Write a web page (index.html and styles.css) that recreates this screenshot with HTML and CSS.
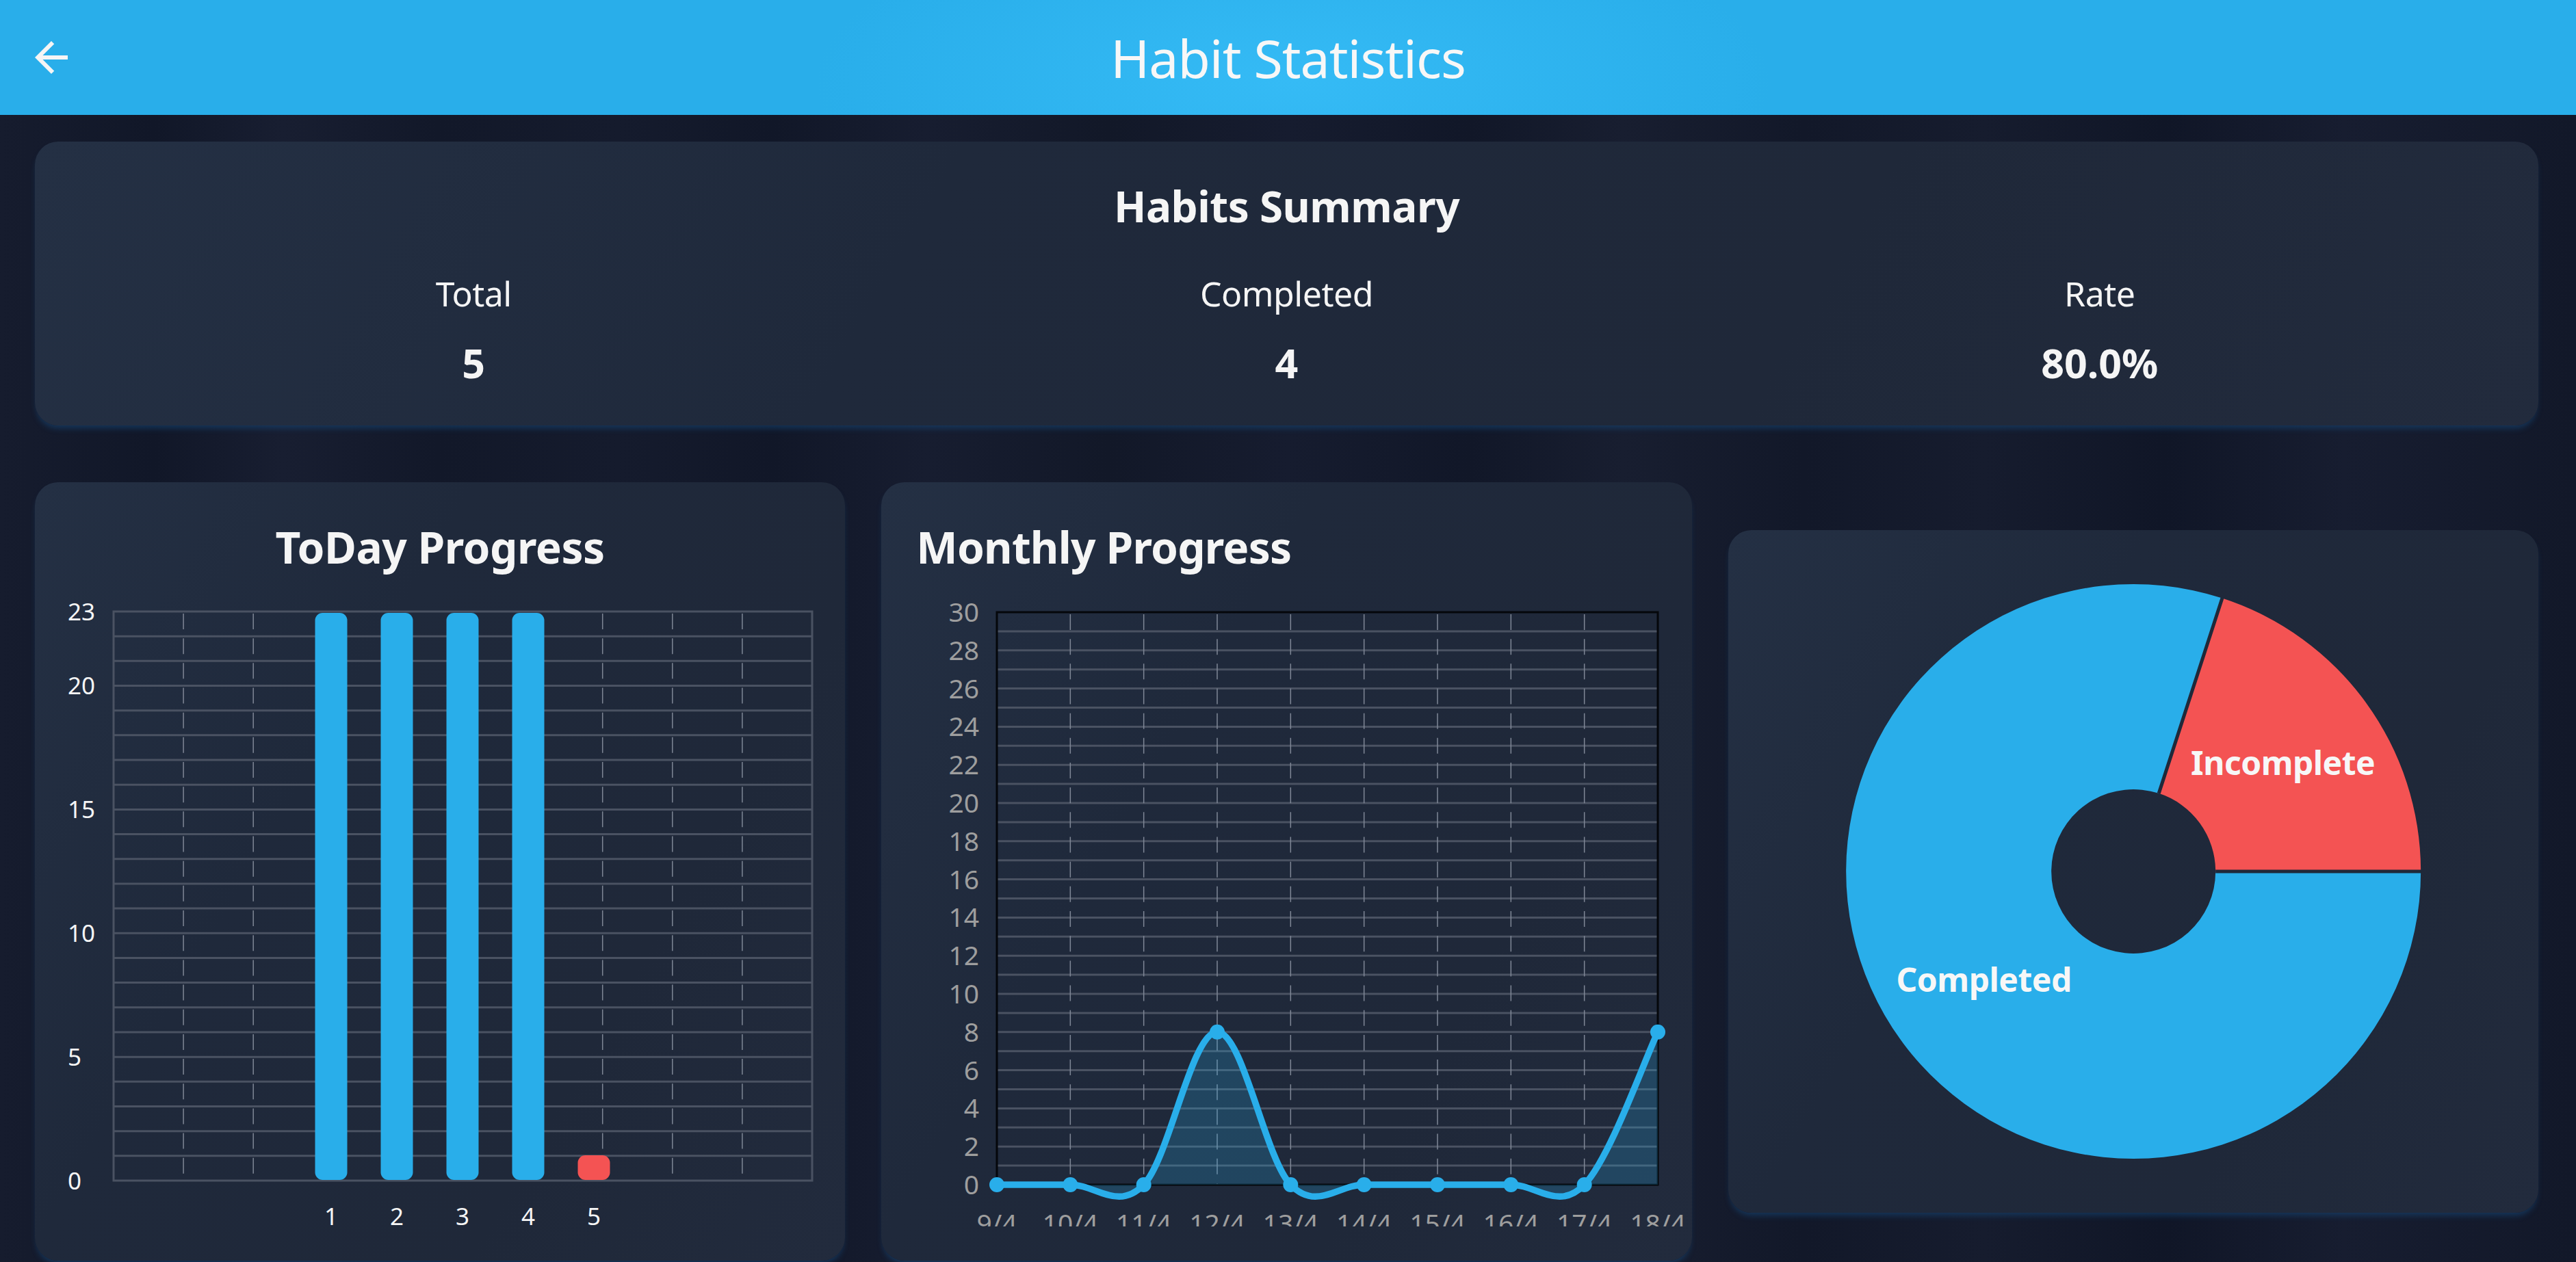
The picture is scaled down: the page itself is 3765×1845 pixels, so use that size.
FILE: index.html
```html
<!DOCTYPE html>
<html lang="en">
<head>
<meta charset="utf-8">
<title>Habit Statistics</title>
<link rel="stylesheet" href="styles.css">
</head>
<body>
<header class="appbar">
  <button class="back" aria-label="Back">
    <svg viewBox="0 0 24 24" width="72" height="72"><path fill="#f5f5f5" d="M20 11H7.83l5.59-5.59L12 4l-8 8 8 8 1.41-1.41L7.83 13H20v-2z"/></svg>
  </button>
  <h1 class="appbar-title">Habit Statistics</h1>
  <span class="appbar-spacer"></span>
</header>

<main class="content">
  <section class="card summary">
    <h2 class="summary-title">Habits Summary</h2>
    <div class="stats">
      <div class="stat"><div class="stat-label">Total</div><div class="stat-value">5</div></div>
      <div class="stat"><div class="stat-label">Completed</div><div class="stat-value">4</div></div>
      <div class="stat"><div class="stat-label">Rate</div><div class="stat-value">80.0%</div></div>
    </div>
  </section>

  <div class="row">
    <section class="card chart-card today">
      <h3 class="chart-title">ToDay Progress</h3>
      <svg class="chart chart-tall" viewBox="0 0 1183 970" preserveAspectRatio="xMinYMin meet">
        <g class="grid-h">
          <path d="M115 70.17H1136M115 106.35H1136M115 142.52H1136M115 178.7H1136M115 214.87H1136M115 251.04H1136M115 287.22H1136M115 323.39H1136M115 359.57H1136M115 395.74H1136M115 431.91H1136M115 468.09H1136M115 504.26H1136M115 540.43H1136M115 576.61H1136M115 612.78H1136M115 648.96H1136M115 685.13H1136M115 721.3H1136M115 757.48H1136M115 793.65H1136M115 829.83H1136"/>
          <rect x="115" y="34" width="1021" height="832" fill="none"/>
        </g>
        <path class="grid-v" d="M217.1 37V866M319.2 37V866M421.3 37V866M523.4 37V866M625.5 37V866M727.6 37V866M829.7 37V866M931.8 37V866M1033.9 37V866"/>
        <g class="bars">
          <rect class="bar-blue" x="409.5" y="36" width="47" height="829" rx="11"/>
          <rect class="bar-blue" x="505.5" y="36" width="47" height="829" rx="11"/>
          <rect class="bar-blue" x="601.5" y="36" width="47" height="829" rx="11"/>
          <rect class="bar-blue" x="697.5" y="36" width="47" height="829" rx="11"/>
          <rect class="bar-red" x="793.5" y="829" width="47" height="36" rx="11"/>
        </g>
        <g class="axis-white">
          <text x="48" y="46.5">23</text>
          <text x="48" y="155">20</text>
          <text x="48" y="335.9">15</text>
          <text x="48" y="516.8">10</text>
          <text x="48" y="697.6">5</text>
          <text x="48" y="878.5">0</text>
        </g>
        <g class="axis-white xl">
          <text x="433" y="931">1</text>
          <text x="529" y="931">2</text>
          <text x="625" y="931">3</text>
          <text x="721" y="931">4</text>
          <text x="817" y="931">5</text>
        </g>
      </svg>
    </section>

    <section class="card chart-card monthly">
      <h3 class="chart-title">Monthly Progress</h3>
      <svg class="chart" viewBox="0 0 1184 933" preserveAspectRatio="xMinYMin meet">
        <path class="grid-h" d="M169 62.9H1135M169 90.8H1135M169 118.7H1135M169 146.6H1135M169 174.5H1135M169 202.4H1135M169 230.3H1135M169 258.2H1135M169 286.1H1135M169 314H1135M169 341.9H1135M169 369.8H1135M169 397.7H1135M169 425.6H1135M169 453.5H1135M169 481.4H1135M169 509.3H1135M169 537.2H1135M169 565.1H1135M169 593H1135M169 620.9H1135M169 648.8H1135M169 676.7H1135M169 704.6H1135M169 732.5H1135M169 760.4H1135M169 788.3H1135M169 816.2H1135M169 844.1H1135"/>
        <path class="grid-v" d="M276.33 38V872M383.67 38V872M491 38V872M598.33 38V872M705.67 38V872M813 38V872M920.33 38V872M1027.67 38V872"/>
        <rect class="plot-border" x="169" y="35" width="966" height="837"/>
        <g transform="translate(169 35)">
          <path class="area" d="M0 837 C0 837 69.76 837 107.33 837 C144.9 837 177.1 876.06 214.67 837 C252.24 797.94 284.43 613.8 322 613.8 C359.57 613.8 391.76 797.94 429.33 837 C466.9 876.06 499.1 837 536.67 837 C574.24 837 606.43 837 644 837 C681.57 837 713.76 837 751.33 837 C788.9 837 821.1 876.06 858.67 837 C896.24 797.94 947.22 652.86 966 613.8 L966 837 L0 837 Z"/>
          <path class="line" d="M0 837 C0 837 69.76 837 107.33 837 C144.9 837 177.1 876.06 214.67 837 C252.24 797.94 284.43 613.8 322 613.8 C359.57 613.8 391.76 797.94 429.33 837 C466.9 876.06 499.1 837 536.67 837 C574.24 837 606.43 837 644 837 C681.57 837 713.76 837 751.33 837 C788.9 837 821.1 876.06 858.67 837 C896.24 797.94 947.22 652.86 966 613.8"/>
          <g class="dots">
            <circle cx="0" cy="837" r="11"/>
            <circle cx="107.33" cy="837" r="11"/>
            <circle cx="214.67" cy="837" r="11"/>
            <circle cx="322" cy="613.8" r="11"/>
            <circle cx="429.33" cy="837" r="11"/>
            <circle cx="536.67" cy="837" r="11"/>
            <circle cx="644" cy="837" r="11"/>
            <circle cx="751.33" cy="837" r="11"/>
            <circle cx="858.67" cy="837" r="11"/>
            <circle cx="966" cy="613.8" r="11"/>
          </g>
        </g>
        <g class="axis-grey yl">
          <text x="143" y="49">30</text>
          <text x="143" y="104.8">28</text>
          <text x="143" y="160.6">26</text>
          <text x="143" y="216.4">24</text>
          <text x="143" y="272.2">22</text>
          <text x="143" y="328">20</text>
          <text x="143" y="383.8">18</text>
          <text x="143" y="439.6">16</text>
          <text x="143" y="495.4">14</text>
          <text x="143" y="551.2">12</text>
          <text x="143" y="607">10</text>
          <text x="143" y="662.8">8</text>
          <text x="143" y="718.6">6</text>
          <text x="143" y="774.4">4</text>
          <text x="143" y="830.2">2</text>
          <text x="143" y="886">0</text>
        </g>
        <g class="axis-grey xl">
          <text x="169" y="943">9/4</text>
          <text x="276.33" y="943">10/4</text>
          <text x="383.67" y="943">11/4</text>
          <text x="491" y="943">12/4</text>
          <text x="598.33" y="943">13/4</text>
          <text x="705.67" y="943">14/4</text>
          <text x="813" y="943">15/4</text>
          <text x="920.33" y="943">16/4</text>
          <text x="1027.67" y="943">17/4</text>
          <text x="1135" y="943">18/4</text>
        </g>
      </svg>
    </section>

    <section class="card pie-card">
      <svg class="pie" viewBox="0 0 1183 998" preserveAspectRatio="xMidYMid meet">
        <path class="slice-blue" d="M721.29 99.56 A420 420 0 1 0 1011.5 499 L711.5 499 A120 120 0 1 1 628.58 384.87 Z"/>
        <path class="slice-red" d="M1011.5 499 A420 420 0 0 0 721.29 99.56 L628.58 384.87 A120 120 0 0 1 711.5 499 Z"/>
        <path class="slice-gap" d="M711.5 499 L1013 499 M628.58 384.87 L721.75 98.1"/>
        <text class="slice-label" x="810" y="358">Incomplete</text>
        <text class="slice-label" x="373" y="675">Completed</text>
      </svg>
    </section>
  </div>
</main>
</body>
</html>
```

FILE: styles.css
```css
* {
  box-sizing: border-box;
  margin: 0;
  padding: 0;
}

html, body {
  width: 3765px;
  height: 1845px;
  overflow: hidden;
}

body {
  font-family: "Noto Sans", "Open Sans", "DejaVu Sans", sans-serif;
  color: #f5f5f5;
  background:
    linear-gradient(90deg,
      #161c2e 0%, #111728 6%, #181e31 11%, #121829 17%, #151b2d 24%,
      #111728 30%, #171d30 36%, #121828 43%, #161c2f 50%, #111728 57%,
      #181e30 63%, #121829 70%, #161c2e 77%, #101627 84%, #171d30 91%, #121829 100%);
}

/* App bar */
.appbar {
  height: 168px;
  display: grid;
  grid-template-columns: 1fr auto 1fr;
  align-items: center;
  background:
    radial-gradient(ellipse 700px 260px at 1890px 120px, rgba(56, 190, 248, 0.8), rgba(56, 190, 248, 0) 100%),
    #29aeea;
}

.back {
  width: 72px;
  height: 72px;
  margin-left: 39px;
  border: 0;
  background: none;
  display: flex;
  cursor: pointer;
}

.back svg {
  display: block;
}

.appbar-title {
  font-weight: 400;
  font-size: 77px;
  line-height: 1;
  letter-spacing: -1px;
  color: #f7f7f7;
}

/* Content */
.content {
  padding: 39px 55px 0 51px;
}

.card {
  border-radius: 34px;
  background: linear-gradient(120deg, #243044 0%, #1f293b 35%, #1f2839 70%, #222b3d 100%);
  box-shadow: 0 7px 10px -3px rgba(24, 90, 150, 0.45);
}

.summary {
  height: 415px;
  padding-top: 58px;
  text-align: center;
}

.summary-title {
  font-size: 62px;
  font-weight: 700;
  line-height: 72px;
  letter-spacing: -0.5px;
}

.stats {
  display: flex;
  padding: 0 47px;
  margin-top: 62px;
}

.stat {
  flex: 1;
}

.stat-label {
  font-size: 50px;
  line-height: 60px;
  font-weight: 400;
  letter-spacing: -0.5px;
}

.stat-value {
  margin-top: 37px;
  font-size: 59px;
  line-height: 68px;
  font-weight: 700;
}

/* Row of charts */
.row {
  display: flex;
  gap: 53px;
  align-items: center;
  margin-top: 83px;
}

.chart-card {
  flex: 1;
  min-width: 0;
  height: 1138px;
  padding-top: 57px;
  overflow: hidden;
}

.chart-title {
  font-size: 64px;
  font-weight: 700;
  line-height: 76px;
  letter-spacing: -0.5px;
  margin-bottom: 22px;
}

.today .chart-title {
  text-align: center;
}

.monthly .chart-title {
  padding-left: 51px;
  letter-spacing: -0.8px;
}

.chart {
  display: block;
  width: 100%;
  height: 933px;
  overflow: hidden;
}

.chart-tall {
  height: 970px;
}

.grid-h {
  stroke: #4a5262;
  stroke-width: 3;
  fill: none;
}

.grid-h rect {
  stroke: #4a5262;
}

.grid-v {
  stroke: #7f8796;
  stroke-width: 1.5;
  stroke-dasharray: 23 13.17;
  fill: none;
}

.plot-border {
  fill: none;
  stroke: #05070b;
  stroke-width: 3;
}

.bar-blue {
  fill: #29aeea;
}

.bar-red {
  fill: #f45353;
}

.axis-white text {
  fill: #f5f5f5;
  font-size: 35px;
  font-family: "Noto Sans", "Open Sans", sans-serif;
}

.axis-white.xl text {
  text-anchor: middle;
}

.axis-grey text {
  fill: #9e9e9e;
  font-size: 39px;
  font-family: "Noto Sans", "Open Sans", sans-serif;
}

.axis-grey.yl text {
  text-anchor: end;
}

.axis-grey.xl text {
  text-anchor: middle;
}

.area {
  fill: rgba(41, 174, 234, 0.22);
}

.line {
  fill: none;
  stroke: #29aeea;
  stroke-width: 9.5;
  stroke-linecap: round;
  stroke-linejoin: round;
}

.dots circle {
  fill: #29aeea;
}

/* Pie */
.pie-card {
  flex: 1;
  min-width: 0;
  height: 998px;
}

.pie {
  display: block;
  width: 100%;
  height: 100%;
}

.slice-blue {
  fill: #29aeea;
}

.slice-red {
  fill: #f45353;
}

.slice-gap {
  stroke: #1f293a;
  stroke-width: 5;
  fill: none;
}

.slice-label {
  fill: #f7f7f7;
  font-size: 48px;
  font-weight: 700;
  text-anchor: middle;
  font-family: "Noto Sans", "Open Sans", sans-serif;
  letter-spacing: -0.5px;
}
```
